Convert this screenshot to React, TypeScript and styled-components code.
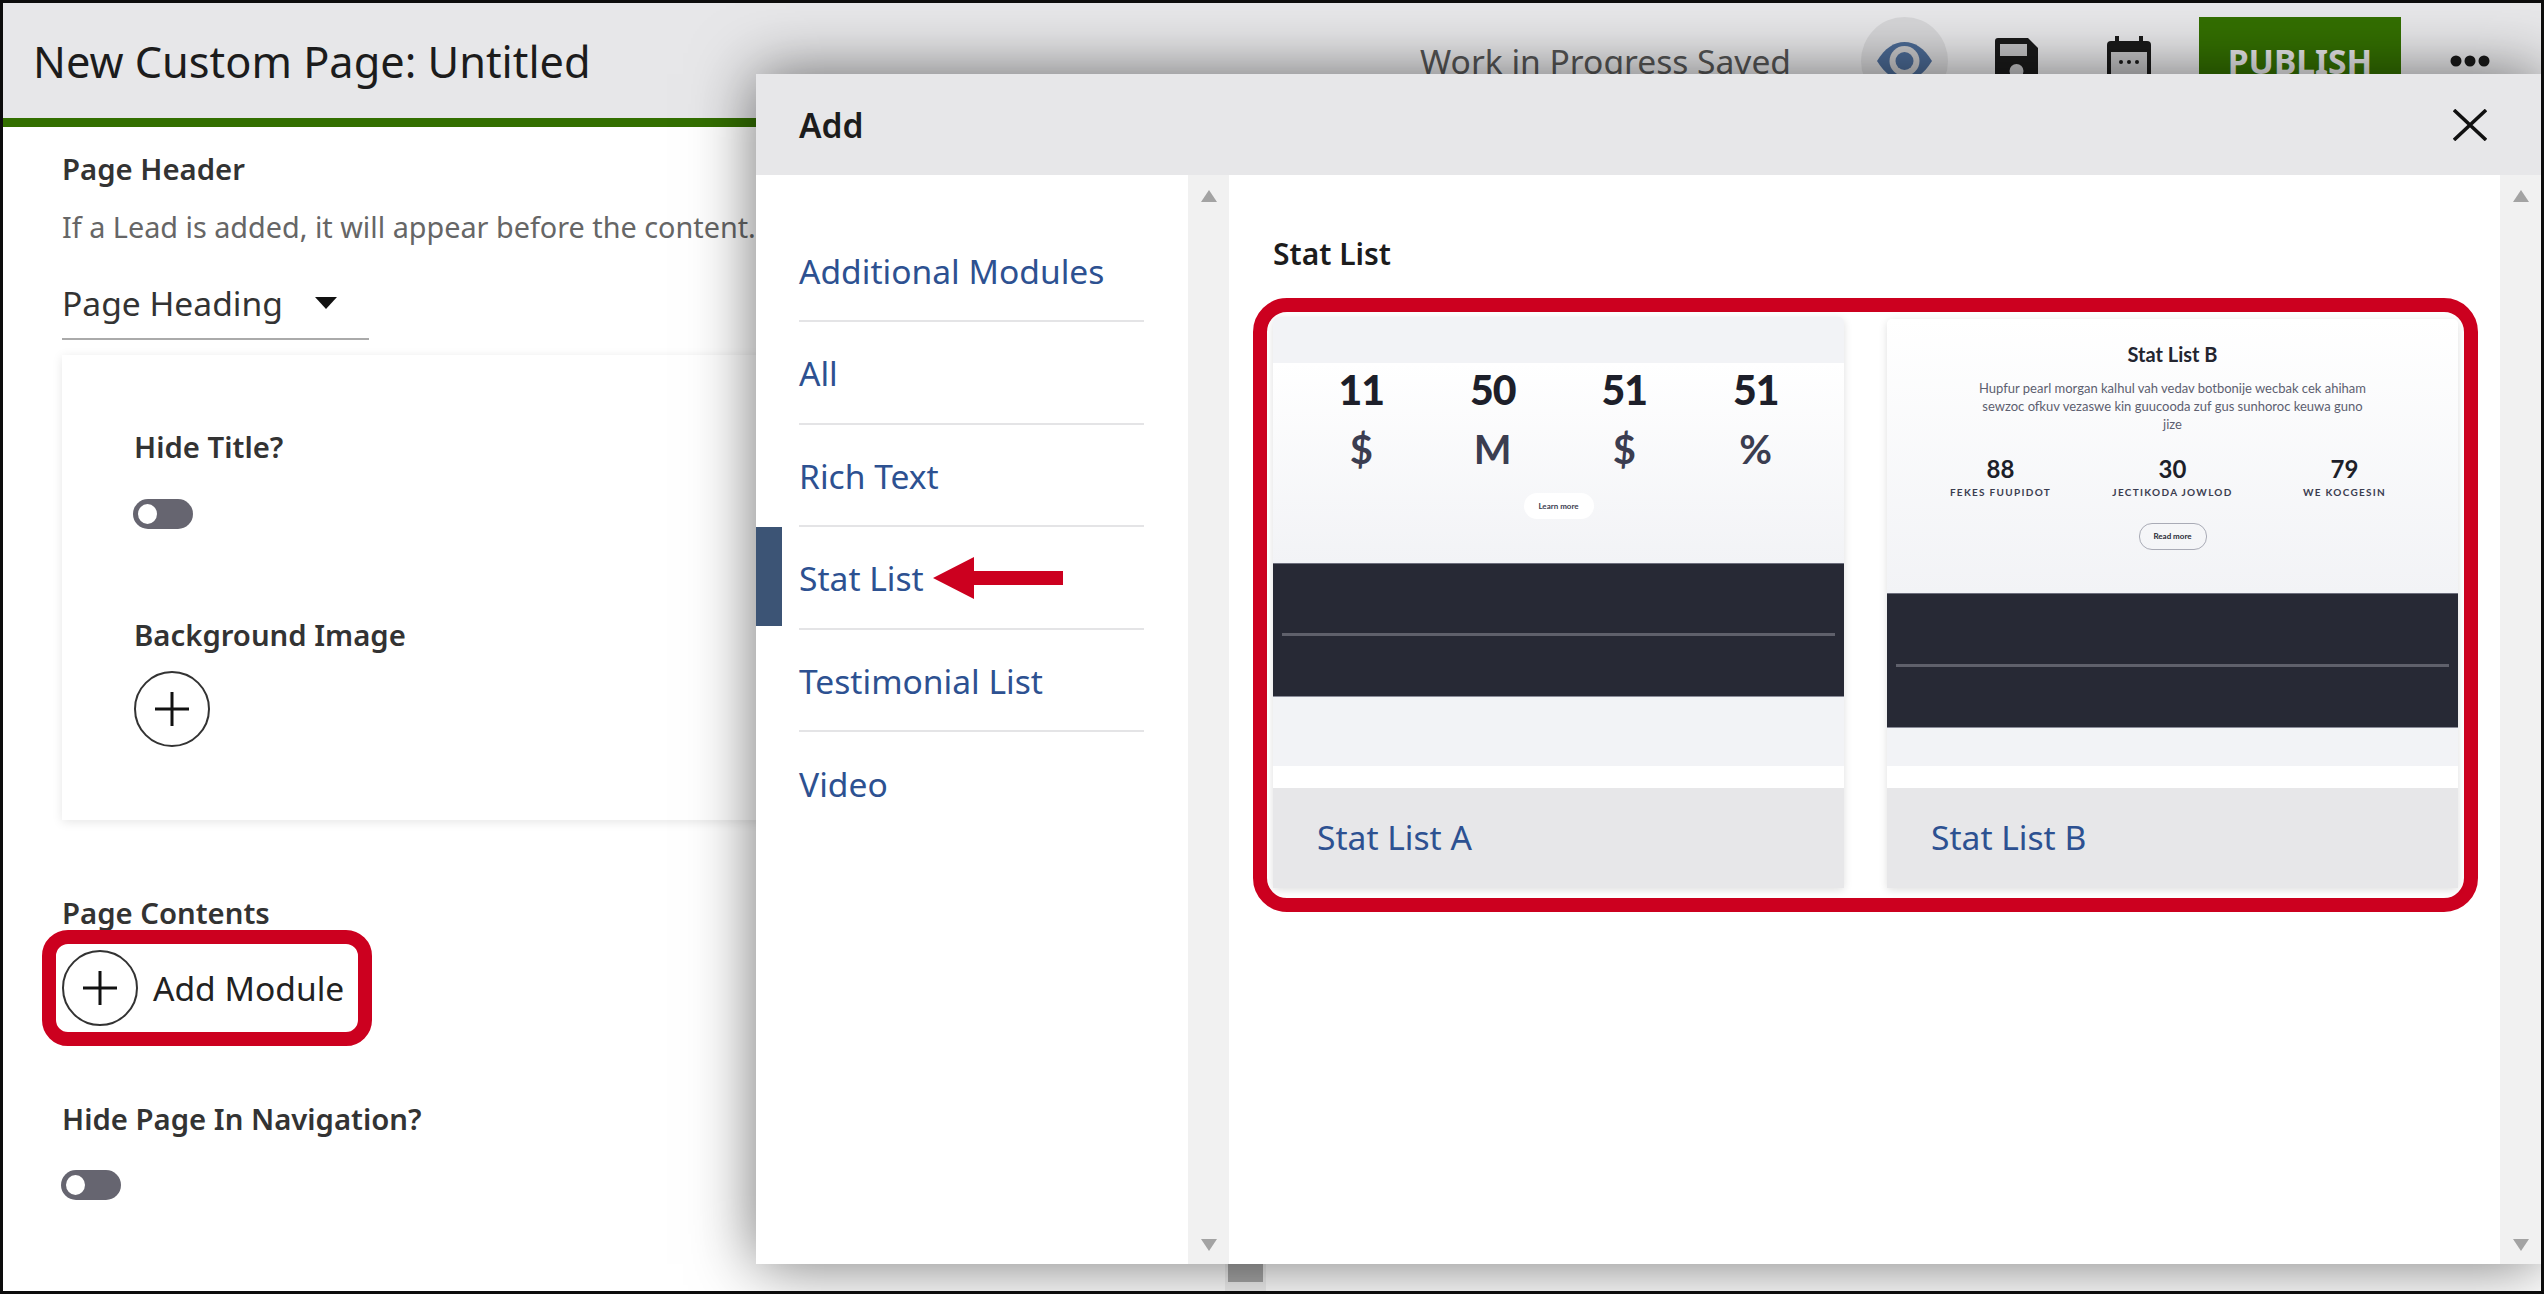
import styled, { createGlobalStyle } from 'styled-components';

const GlobalStyle = createGlobalStyle`
  html, body {
    margin: 0;
    padding: 0;
    overflow: hidden;
    background: #fff;
    font-family: "Noto Sans", "Open Sans", sans-serif;
  }
  * {
    box-sizing: border-box;
  }
`;

const Frame = styled.div`
  position: relative;
  width: 2544px;
  height: 1294px;
  border: 3px solid #0c0c0c;
  background: #fff;
  overflow: hidden;
`;

const PageHeader = styled.header`
  display: flex;
  align-items: center;
  height: 124px;
  padding: 0 51px 0 30px;
  background: #e7e7e9;
  border-bottom: 9px solid #336f00;
`;

const PageTitle = styled.h1`
  flex: 1;
  margin: 0;
  padding-top: 1px;
  font-size: 43.3px;
  font-weight: 400;
  color: #1c1c1c;
`;

const SaveStatus = styled.span`
  font-size: 33.6px;
  color: #555;
`;

const IconSlot = styled.div<{ $left: number; $width: number }>`
  display: flex;
  align-items: center;
  justify-content: center;
  width: ${(p) => p.$width}px;
  margin-left: ${(p) => p.$left}px;
`;

const EyeCircle = styled(IconSlot)`
  height: 88px;
  border-radius: 50%;
  background: #d6d6d8;
`;

const PublishButton = styled.button`
  width: 202px;
  height: 88px;
  margin-left: 48px;
  border: 0;
  background: #336f00;
  color: #e7e7e9;
  font-family: inherit;
  font-size: 33.6px;
  font-weight: 700;
`;

const PageBody = styled.main`
  padding: 23px 0 0 59px;
`;

const FieldLabel = styled.div<{ $top?: number }>`
  margin-top: ${(p) => p.$top ?? 0}px;
  font-size: 29.3px;
  font-weight: 600;
  line-height: 38px;
  color: #333;
`;

const LeadHint = styled.p`
  margin: 20px 0 0;
  font-size: 28.8px;
  line-height: 38px;
  color: #666;
  white-space: nowrap;
`;

const SelectField = styled.div`
  display: flex;
  align-items: center;
  gap: 32px;
  width: 307px;
  height: 73px;
  margin-top: 21px;
  border-bottom: 2px solid #aaa;
  font-size: 33.6px;
  color: #333;
`;

const SelectCaret = styled.span`
  width: 0;
  height: 0;
  border-left: 11px solid transparent;
  border-right: 11px solid transparent;
  border-top: 12px solid #111;
`;

const HeaderCard = styled.section`
  width: 1100px;
  height: 465px;
  margin-top: 15px;
  padding: 73px 0 0 72px;
  background: #fff;
  box-shadow: 0 2px 10px rgba(0, 0, 0, 0.1);
`;

const Toggle = styled.div<{ $top: number }>`
  position: relative;
  width: 60px;
  height: 30px;
  margin: ${(p) => p.$top}px 0 0 -1px;
  border-radius: 15px;
  background: #666570;

  &::after {
    content: '';
    position: absolute;
    top: 5px;
    left: 5px;
    width: 19px;
    height: 20px;
    border-radius: 50%;
    background: #fff;
  }
`;

const PlusCircle = styled.div<{ $top?: number }>`
  display: flex;
  align-items: center;
  justify-content: center;
  flex: none;
  width: 76px;
  height: 76px;
  margin-top: ${(p) => p.$top ?? 0}px;
  border: 2px solid #333;
  border-radius: 50%;
`;

const AddModuleBox = styled.div`
  display: inline-flex;
  align-items: center;
  gap: 15px;
  height: 116px;
  margin: -2px 0 0 -20px;
  padding: 0 14px 0 6px;
  border: 14px solid #cc001f;
  border-radius: 26px;
  font-size: 33.6px;
  color: #222;
`;

const PageScrollTrack = styled.div`
  position: absolute;
  left: 1222px;
  bottom: 0;
  width: 41px;
  height: 30px;
  padding: 0 3px;
  background: #f1f1f1;

  &::after {
    content: '';
    display: block;
    height: 21px;
    background: #a8a8a8;
  }
`;

const Modal = styled.div`
  position: absolute;
  top: 71px;
  left: 753px;
  right: 0;
  bottom: 27px;
  display: flex;
  flex-direction: column;
  background: #fff;
  box-shadow: 0 0 60px rgba(0, 0, 0, 0.55);
`;

const ModalHeader = styled.div`
  display: flex;
  align-items: center;
  justify-content: space-between;
  flex: none;
  height: 101px;
  padding: 0 54px 0 43px;
  background: #e7e7e9;
`;

const ModalTitle = styled.h2`
  margin: 0;
  font-size: 33.6px;
  font-weight: 600;
  color: #1c1c1c;
`;

const ModalBody = styled.div`
  display: flex;
  flex: 1;
  min-height: 0;
`;

const CategoryNav = styled.nav`
  flex: none;
  width: 432px;
  padding: 44.5px 44px 0 43px;
`;

const CategoryItem = styled.div<{ $active?: boolean }>`
  position: relative;
  display: flex;
  align-items: center;
  height: 102.5px;
  padding-top: 2px;
  border-bottom: 2px solid #e4e4e6;
  font-size: 33.6px;
  color: #2d5191;

  &:last-child {
    border-bottom: 0;
  }

  ${(p) =>
    p.$active &&
    `
    &::before {
      content: '';
      position: absolute;
      top: 0;
      bottom: 2px;
      left: -43px;
      width: 26px;
      background: #3c5475;
    }
  `}
`;

const ArrowMark = styled.svg`
  flex: none;
  width: 130px;
  height: 42px;
  margin-left: 9px;
`;

const Scrollbar = styled.div`
  display: flex;
  flex-direction: column;
  justify-content: space-between;
  align-items: center;
  flex: none;
  width: 41px;
  padding: 15px 0 13px;
  background: #f1f1f1;
`;

const ScrollArrow = styled.span<{ $down?: boolean }>`
  width: 0;
  height: 0;
  border-left: 8px solid transparent;
  border-right: 8px solid transparent;
  ${(p) => (p.$down ? 'border-top: 12px solid #a3a3a3;' : 'border-bottom: 12px solid #a3a3a3;')}
`;

const ContentPane = styled.div`
  flex: 1;
  padding: 60px 0 0 24px;
`;

const PaneTitle = styled.h3`
  margin: 0 0 25px 20px;
  font-size: 30px;
  font-weight: 600;
  line-height: 38px;
  color: #1c1c1c;
`;

const CardHighlight = styled.div`
  display: grid;
  grid-template-columns: 571px 571px;
  gap: 43px;
  width: 1225px;
  height: 614px;
  padding: 5px 6px 10px;
  border: 14px solid #cc001f;
  border-radius: 34px;
`;

const ModuleCard = styled.article<{ $inset?: number }>`
  display: flex;
  flex-direction: column;
  margin-top: ${(p) => p.$inset ?? 0}px;
  border-radius: 5px 5px 0 0;
  background: #fff;
  box-shadow: 0 2px 9px rgba(0, 0, 0, 0.13);
  overflow: hidden;
`;

const Band = styled.div<{ $height: number }>`
  flex: none;
  height: ${(p) => p.$height}px;
  background: #f2f3f6;
`;

const Hero = styled.div<{ $height: number }>`
  display: flex;
  flex-direction: column;
  align-items: center;
  flex: none;
  height: ${(p) => p.$height}px;
  background: linear-gradient(#fff, #f2f3f6);
  font-family: Lato, "Noto Sans", sans-serif;
`;

const FourStats = styled.div`
  display: grid;
  grid-template-columns: repeat(4, 131.5px);
  margin-top: 2px;
  text-align: center;
`;

const BigFigure = styled.div`
  font-size: 41px;
  font-weight: 900;
  line-height: 50px;
  letter-spacing: -1px;
  color: #1d1f2a;
`;

const BigUnit = styled.div`
  margin-top: 9px;
  font-size: 40px;
  font-weight: 700;
  line-height: 50px;
  color: #3b3d50;
`;

const LearnPill = styled.div`
  width: 70px;
  height: 26px;
  margin-top: 19px;
  border-radius: 13px;
  background: #fff;
  font-size: 8px;
  font-weight: 700;
  line-height: 26px;
  text-align: center;
  color: #3b3d50;
`;

const DarkBlock = styled.div<{ $height: number; $line: number }>`
  flex: none;
  height: ${(p) => p.$height}px;
  padding: ${(p) => p.$line}px 9px 0;
  background: #272935;
  border-top: 1px solid #6c6e7c;
  border-bottom: 1px solid #8a8c99;
`;

const DarkRule = styled.div`
  height: 3px;
  background: #5f606b;
`;

const WhiteGap = styled.div`
  flex: none;
  height: 22px;
`;

const CardFooter = styled.div`
  display: flex;
  align-items: center;
  flex: 1;
  padding: 0 0 3px 44px;
  background: #e7e7e9;
  font-size: 33.6px;
  color: #2d5191;
`;

const HeroTitle = styled.div`
  margin-top: 22px;
  font-size: 20px;
  font-weight: 700;
  line-height: 26px;
  color: #23252f;
`;

const HeroCopy = styled.p`
  margin: 12px 0 0;
  font-size: 13px;
  line-height: 18px;
  text-align: center;
  color: #5d5f70;
`;

const ThreeStats = styled.div`
  display: grid;
  grid-template-columns: repeat(3, 172px);
  margin-top: 21px;
  text-align: center;
`;

const SmallFigure = styled.div`
  font-size: 24px;
  font-weight: 700;
  line-height: 30px;
  color: #1d1f2a;
`;

const SmallCaption = styled.div`
  margin-top: 1px;
  font-size: 10px;
  font-weight: 700;
  line-height: 14px;
  letter-spacing: 1.3px;
  color: #3b3d50;
`;

const ReadButton = styled.div`
  width: 68px;
  height: 27px;
  margin-top: 24px;
  border: 1px solid #a9abb6;
  border-radius: 13px;
  font-size: 8px;
  font-weight: 700;
  line-height: 25px;
  text-align: center;
  color: #272935;
`;

function PlusIcon() {
  return (
    <svg width="36" height="36" viewBox="0 0 36 36">
      <path d="M18 1v34M1 18h34" stroke="#111" strokeWidth="3" fill="none" />
    </svg>
  );
}

function EyeIcon() {
  return (
    <svg width="55" height="38" viewBox="0 0 55 38">
      <path d="M0 19C8 6 17 0 27.5 0S47 6 55 19C47 32 38 38 27.5 38S8 32 0 19Z" fill="#4b6a95" />
      <circle cx="27.5" cy="19" r="15" fill="#c9c9cb" />
      <circle cx="27.5" cy="19" r="9" fill="#4b6a95" />
    </svg>
  );
}

function SaveIcon() {
  return (
    <svg width="43" height="46" viewBox="0 0 43 46">
      <path d="M3 0h30l10 10v33a3 3 0 0 1-3 3H3a3 3 0 0 1-3-3V3a3 3 0 0 1 3-3Z" fill="#1a1a1a" />
      <rect x="5" y="6" width="27" height="12" fill="#c4c4c6" />
      <circle cx="21.5" cy="33" r="7" fill="#c4c4c6" />
    </svg>
  );
}

function CalendarIcon() {
  return (
    <svg width="44" height="50" viewBox="0 0 44 50">
      <rect x="8" y="0" width="4" height="8" fill="#1a1a1a" />
      <rect x="32" y="0" width="4" height="8" fill="#1a1a1a" />
      <rect x="0" y="5" width="44" height="45" rx="4" fill="#1a1a1a" />
      <rect x="4" y="16" width="36" height="30" fill="#c4c4c6" />
      <circle cx="14" cy="26" r="2" fill="#1a1a1a" />
      <circle cx="22" cy="26" r="2" fill="#1a1a1a" />
      <circle cx="30" cy="26" r="2" fill="#1a1a1a" />
    </svg>
  );
}

function MoreIcon() {
  return (
    <svg width="40" height="12" viewBox="0 0 40 12">
      <circle cx="6" cy="6" r="5.5" fill="#1a1a1a" />
      <circle cx="20" cy="6" r="5.5" fill="#1a1a1a" />
      <circle cx="34" cy="6" r="5.5" fill="#1a1a1a" />
    </svg>
  );
}

function CloseIcon() {
  return (
    <svg width="34" height="32" viewBox="0 0 34 32">
      <path d="M1 1l32 30M33 1L1 31" stroke="#111" strokeWidth="3.5" fill="none" />
    </svg>
  );
}

const categories = ['Additional Modules', 'All', 'Rich Text', 'Stat List', 'Testimonial List', 'Video'];

const statListA = [
  { figure: '11', unit: '$' },
  { figure: '50', unit: 'M' },
  { figure: '51', unit: '$' },
  { figure: '51', unit: '%' },
];

const statListB = [
  { figure: '88', caption: 'FEKES FUUPIDOT' },
  { figure: '30', caption: 'JECTIKODA JOWLOD' },
  { figure: '79', caption: 'WE KOCGESIN' },
];

function App() {
  return (
    <Frame>
      <GlobalStyle />
      <PageHeader>
        <PageTitle>New Custom Page: Untitled</PageTitle>
        <SaveStatus>Work in Progress Saved</SaveStatus>
        <EyeCircle $left={70} $width={87}>
          <EyeIcon />
        </EyeCircle>
        <IconSlot $left={47} $width={43}>
          <SaveIcon />
        </IconSlot>
        <IconSlot $left={69} $width={44}>
          <CalendarIcon />
        </IconSlot>
        <PublishButton>PUBLISH</PublishButton>
        <IconSlot $left={49} $width={40}>
          <MoreIcon />
        </IconSlot>
      </PageHeader>

      <PageBody>
        <FieldLabel>Page Header</FieldLabel>
        <LeadHint>If a Lead is added, it will appear before the content.</LeadHint>
        <SelectField>
          Page Heading
          <SelectCaret />
        </SelectField>
        <HeaderCard>
          <FieldLabel>Hide Title?</FieldLabel>
          <Toggle $top={33} />
          <FieldLabel $top={87}>Background Image</FieldLabel>
          <PlusCircle $top={17}>
            <PlusIcon />
          </PlusCircle>
        </HeaderCard>
        <FieldLabel $top={74}>Page Contents</FieldLabel>
        <AddModuleBox>
          <PlusCircle>
            <PlusIcon />
          </PlusCircle>
          Add Module
        </AddModuleBox>
        <FieldLabel $top={54}>Hide Page In Navigation?</FieldLabel>
        <Toggle $top={32} />
      </PageBody>
      <PageScrollTrack />

      <Modal>
        <ModalHeader>
          <ModalTitle>Add</ModalTitle>
          <CloseIcon />
        </ModalHeader>
        <ModalBody>
          <CategoryNav>
            {categories.map((category) => (
              <CategoryItem key={category} $active={category === 'Stat List'}>
                {category}
                {category === 'Stat List' && (
                  <ArrowMark viewBox="0 0 130 42">
                    <path d="M0 21L41 0v14h89v14H41v14Z" fill="#cc001f" />
                  </ArrowMark>
                )}
              </CategoryItem>
            ))}
          </CategoryNav>
          <Scrollbar>
            <ScrollArrow />
            <ScrollArrow $down />
          </Scrollbar>
          <ContentPane>
            <PaneTitle>Stat List</PaneTitle>
            <CardHighlight>
              <ModuleCard>
                <Band $height={46} />
                <Hero $height={200}>
                  <FourStats>
                    {statListA.map((stat, index) => (
                      <div key={index}>
                        <BigFigure>{stat.figure}</BigFigure>
                        <BigUnit>{stat.unit}</BigUnit>
                      </div>
                    ))}
                  </FourStats>
                  <LearnPill>Learn more</LearnPill>
                </Hero>
                <DarkBlock $height={134} $line={69}>
                  <DarkRule />
                </DarkBlock>
                <Band $height={69} />
                <WhiteGap />
                <CardFooter>Stat List A</CardFooter>
              </ModuleCard>
              <ModuleCard $inset={2}>
                <Hero $height={274}>
                  <HeroTitle>Stat List B</HeroTitle>
                  <HeroCopy>
                    Hupfur pearl morgan kalhul vah vedav botbonije wecbak cek ahiham
                    <br />
                    sewzoc ofkuv vezaswe kin guucooda zuf gus sunhoroc keuwa guno
                    <br />
                    jize
                  </HeroCopy>
                  <ThreeStats>
                    {statListB.map((stat) => (
                      <div key={stat.caption}>
                        <SmallFigure>{stat.figure}</SmallFigure>
                        <SmallCaption>{stat.caption}</SmallCaption>
                      </div>
                    ))}
                  </ThreeStats>
                  <ReadButton>Read more</ReadButton>
                </Hero>
                <DarkBlock $height={135} $line={70}>
                  <DarkRule />
                </DarkBlock>
                <Band $height={38} />
                <WhiteGap />
                <CardFooter>Stat List B</CardFooter>
              </ModuleCard>
            </CardHighlight>
          </ContentPane>
          <Scrollbar>
            <ScrollArrow />
            <ScrollArrow $down />
          </Scrollbar>
        </ModalBody>
      </Modal>
    </Frame>
  );
}

export default App;
